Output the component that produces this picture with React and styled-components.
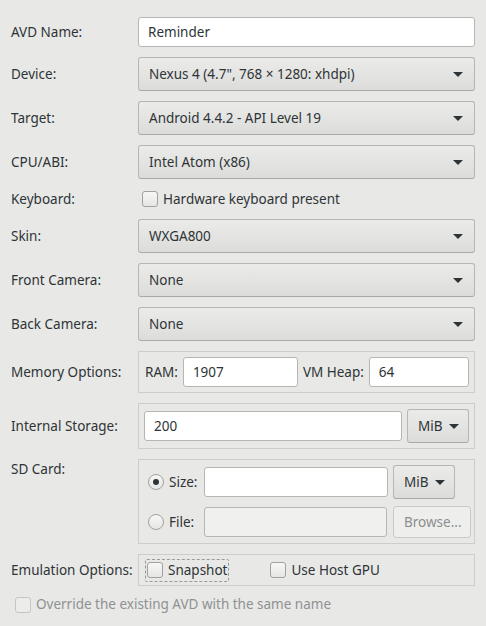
import React from 'react';
import styled, { createGlobalStyle } from 'styled-components';

const Global = createGlobalStyle`
  html, body {
    margin: 0;
    background: #e8e8e7;
  }
  body {
    font-family: "Noto Sans", "Open Sans", sans-serif;
    font-size: 13.5px;
    color: #2e3436;
  }
`;

const Form = styled.div`
  width: 486px;
  height: 626px;
  box-sizing: border-box;
  padding: 17px 11px 0 11px;
  display: grid;
  grid-template-columns: 127px 337px;
  grid-template-rows: 30px 34px 34px 34px 20px 34px 34px 34px 42px 46px 85px 32px 20px;
  row-gap: 10px;
  align-items: center;
`;

const Label = styled.div`
  align-self: ${p => (p.top ? 'start' : 'center')};
  padding-top: ${p => (p.top ? '2px' : '0')};
  line-height: 17px;
  white-space: nowrap;
`;

const Entry = styled.div`
  box-sizing: border-box;
  height: 30px;
  width: ${p => p.w || 'auto'};
  flex: ${p => (p.grow ? '1' : 'none')};
  border: 1px solid #b6b6b3;
  border-radius: 3px;
  background: ${p => (p.disabled ? '#f0f0ef' : '#fff')};
  padding: 0 9px;
  display: flex;
  align-items: center;
  line-height: 17px;
`;

const Button = styled.div`
  box-sizing: border-box;
  flex: none;
  height: ${p => p.h || 34}px;
  width: ${p => p.w || 'auto'};
  border: 1px solid ${p => (p.disabled ? '#c9c9c7' : '#b6b6b3')};
  border-bottom-color: ${p => (p.disabled ? '#c9c9c7' : '#a9a9a6')};
  border-radius: 3px;
  background: ${p => (p.disabled ? '#eeeeed' : 'linear-gradient(#ebebea, #dcdcdb)')};
  color: ${p => (p.disabled ? '#8b8e8f' : '#2e3436')};
  padding: 0 10px;
  display: flex;
  align-items: center;
  justify-content: space-between;
  gap: 6px;
  line-height: 17px;
  white-space: nowrap;
`;

const Arrow = styled.span`
  width: 0;
  height: 0;
  border-left: 5px solid transparent;
  border-right: 5px solid transparent;
  border-top: 5px solid #2e3436;
  margin-right: ${p => p.mr ?? 0}px;
`;

const Combo = ({ children }) => (
  <Button>
    <span>{children}</span>
    <Arrow mr={1} />
  </Button>
);

const Frame = styled.div`
  box-sizing: border-box;
  align-self: stretch;
  border: 1px solid #cdcdcb;
  padding: ${p => p.pad || '5px 5px'};
  display: flex;
  flex-direction: ${p => (p.column ? 'column' : 'row')};
  align-items: ${p => (p.column ? 'stretch' : 'center')};
  gap: ${p => p.gap ?? 6}px;
`;

const Row = styled.div`
  display: flex;
  align-items: center;
  gap: ${p => p.gap ?? 6}px;
`;

const Box = styled.span`
  box-sizing: border-box;
  width: 16px;
  height: 16px;
  border: 1px solid ${p => (p.disabled ? '#c6c6c4' : '#a1a19e')};
  border-radius: ${p => (p.round ? '50%' : '3px')};
  background: ${p => (p.disabled ? '#ececeb' : 'linear-gradient(#f7f7f7, #e6e6e5)')};
  display: inline-flex;
  align-items: center;
  justify-content: center;
  flex: none;
`;

const Dot = styled.span`
  width: 6px;
  height: 6px;
  border-radius: 50%;
  background: #2e3436;
`;

const Check = styled.label`
  display: inline-flex;
  align-items: center;
  gap: 5px;
  line-height: 17px;
  color: ${p => (p.disabled ? '#8f9192' : 'inherit')};
  padding: ${p => (p.tight ? '0 1px' : '2px 1px')};
  border: 1px dashed ${p => (p.focus ? '#9a9a98' : 'transparent')};
  border-radius: 2px;
`;

const RadioLabel = styled.span`
  width: 35px;
  margin-left: 5px;
  flex: none;
`;

const Spacer = styled.div`
  width: ${p => p.w}px;
  flex: none;
`;

const Wide = styled.div`
  grid-column: 1 / span 2;
  padding-left: 2px;
`;

export default function App() {
  return (
    <>
      <Global />
      <Form>
        <Label>AVD Name:</Label>
        <Entry>Reminder</Entry>

        <Label>Device:</Label>
        <Combo>Nexus 4 (4.7", 768 × 1280: xhdpi)</Combo>

        <Label>Target:</Label>
        <Combo>Android 4.4.2 - API Level 19</Combo>

        <Label>CPU/ABI:</Label>
        <Combo>Intel Atom (x86)</Combo>

        <Label>Keyboard:</Label>
        <Row gap={0}>
          <Spacer w={2} />
          <Check tight>
            <Box />
            Hardware keyboard present
          </Check>
        </Row>

        <Label>Skin:</Label>
        <Combo>WXGA800</Combo>

        <Label>Front Camera:</Label>
        <Combo>None</Combo>

        <Label>Back Camera:</Label>
        <Combo>None</Combo>

        <Label>Memory Options:</Label>
        <Frame pad="5px 5px 5px 6px" gap={5}>
          <span>RAM:</span>
          <Entry w="115px">1907</Entry>
          <span>VM Heap:</span>
          <Entry grow>64</Entry>
        </Frame>

        <Label>Internal Storage:</Label>
        <Frame pad="5px 5px" gap={5}>
          <Entry grow>200</Entry>
          <Button w="62px">
            MiB <Arrow />
          </Button>
        </Frame>

        <Label top>SD Card:</Label>
        <Frame column pad="5px 5px 5px 9px" gap={7}>
          <Row gap={0}>
            <Box round>
              <Dot />
            </Box>
            <RadioLabel>Size:</RadioLabel>
            <Entry w="184px" />
            <Spacer w={5} />
            <Button w="62px">
              MiB <Arrow />
            </Button>
          </Row>
          <Row gap={0}>
            <Box round />
            <RadioLabel>File:</RadioLabel>
            <Entry w="183px" disabled />
            <Spacer w={6} />
            <Button w="78px" h={32} disabled>
              Browse...
            </Button>
          </Row>
        </Frame>

        <Label>Emulation Options:</Label>
        <Frame pad="0 6px" gap={39}>
          <Check focus>
            <Box />
            Snapshot
          </Check>
          <Check>
            <Box />
            Use Host GPU
          </Check>
        </Frame>

        <Wide>
          <Check disabled tight>
            <Box disabled />
            Override the existing AVD with the same name
          </Check>
        </Wide>
      </Form>
    </>
  );
}
